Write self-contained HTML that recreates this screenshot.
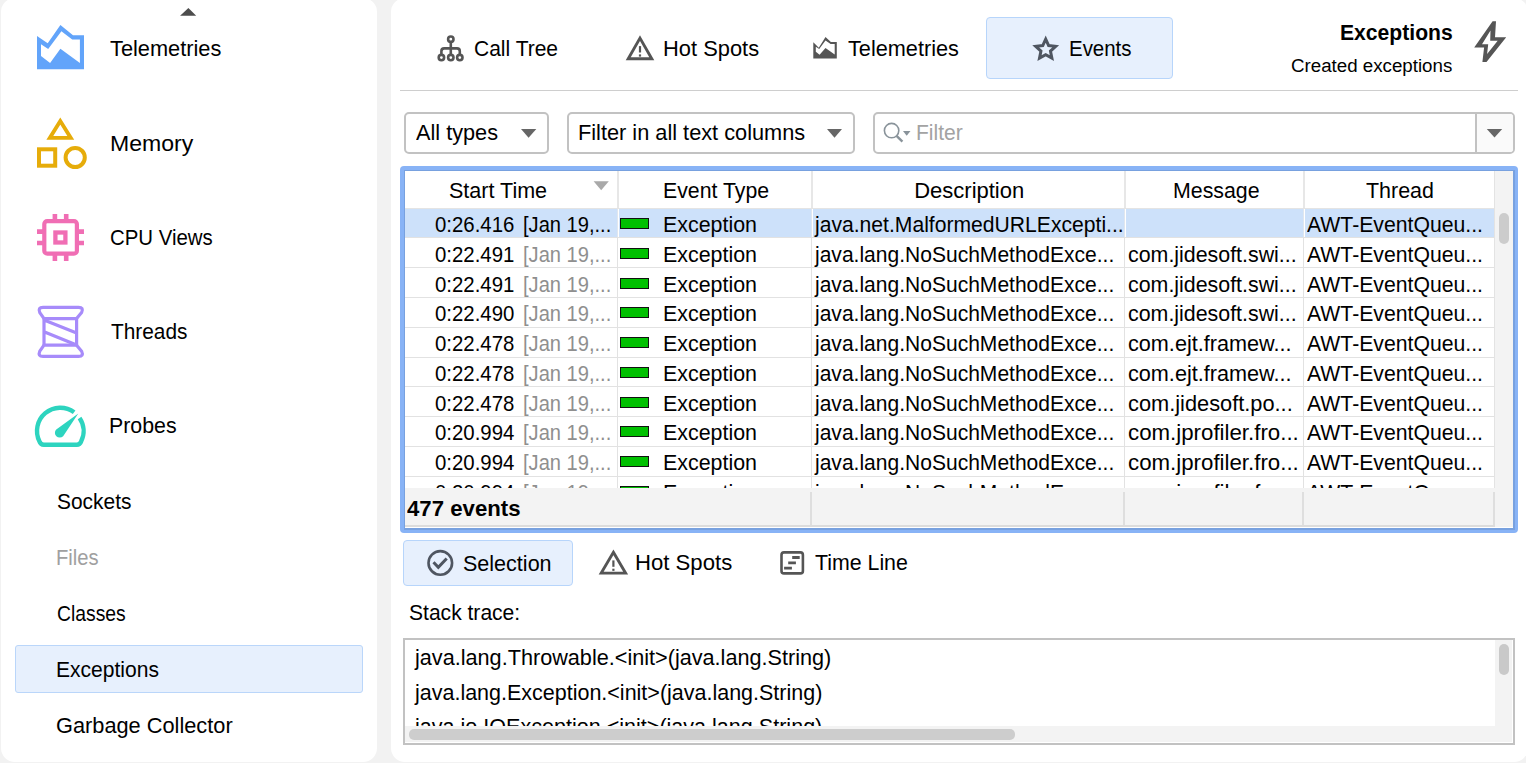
<!DOCTYPE html>
<html><head><meta charset="utf-8"><style>
html,body{margin:0;padding:0;}
body{width:1526px;height:763px;overflow:hidden;background:#f2f2f2;position:relative;font-family:'Liberation Sans', sans-serif;}
.t{position:absolute;white-space:pre;line-height:30px;font-family:'Liberation Sans', sans-serif;transform-origin:0 0;}
</style></head><body>
<div style="position:absolute;left:1px;top:-2px;width:376px;height:764px;background:#fff;border-radius:14px;"></div>
<div style="position:absolute;left:391px;top:-2px;width:1137px;height:764px;background:#fff;border-radius:14px;"></div>
<div class="t" style="left:109.71px;top:34px;font-size:22px;color:#000;transform:scaleX(0.9900);">Telemetries</div>
<div class="t" style="left:109.51px;top:129px;font-size:22px;color:#000;transform:scaleX(1.0477);">Memory</div>
<div class="t" style="left:109.96px;top:223px;font-size:22px;color:#000;transform:scaleX(0.9265);">CPU Views</div>
<div class="t" style="left:110.53px;top:317px;font-size:22px;color:#000;transform:scaleX(0.9469);">Threads</div>
<div class="t" style="left:109.25px;top:411px;font-size:22px;color:#000;transform:scaleX(0.9701);">Probes</div>
<div style="position:absolute;left:14.5px;top:644.5px;width:348.0px;height:48.5px;background:#e7f0fd;border:1.5px solid #bad6fa;border-radius:3px;box-sizing:border-box;"></div>
<div class="t" style="left:56.95px;top:487px;font-size:22px;color:#000;transform:scaleX(0.9508);">Sockets</div>
<div class="t" style="left:56.35px;top:543px;font-size:22px;color:#a0a0a0;transform:scaleX(0.9168);">Files</div>
<div class="t" style="left:57.02px;top:599px;font-size:22px;color:#000;transform:scaleX(0.8790);">Classes</div>
<div class="t" style="left:56.27px;top:655px;font-size:22px;color:#000;transform:scaleX(0.9570);">Exceptions</div>
<div class="t" style="left:56.21px;top:711px;font-size:22px;color:#000;transform:scaleX(0.9895);">Garbage Collector</div>
<div style="position:absolute;left:985.5px;top:16.5px;width:187.0px;height:62.5px;background:#e7f0fd;border:1.5px solid #b7d5fb;border-radius:4px;box-sizing:border-box;"></div>
<div class="t" style="left:473.73px;top:34px;font-size:22px;color:#000;transform:scaleX(0.9547);">Call Tree</div>
<div class="t" style="left:662.71px;top:34px;font-size:22px;color:#000;transform:scaleX(0.9946);">Hot Spots</div>
<div class="t" style="left:848.01px;top:34px;font-size:22px;color:#000;transform:scaleX(0.9856);">Telemetries</div>
<div class="t" style="left:1068.72px;top:34px;font-size:22px;color:#000;transform:scaleX(0.9295);">Events</div>
<div class="t" style="left:1339.89px;top:18px;font-size:22px;color:#000;font-weight:bold;transform:scaleX(0.9600);">Exceptions</div>
<div class="t" style="left:1290.65px;top:51px;font-size:18px;color:#000;transform:scaleX(1.0396);">Created exceptions</div>
<div style="position:absolute;left:400px;top:90px;width:1118px;height:1.2999999999999972px;background:#cecece;"></div>
<div style="position:absolute;left:403.5px;top:111.5px;width:145.0px;height:42.0px;border:2px solid #c2c2c2;border-radius:5px;box-sizing:border-box;background:#fff;"></div>
<div class="t" style="left:416.16px;top:118px;font-size:22px;color:#000;transform:scaleX(0.9866);">All types</div>
<div style="position:absolute;left:566.5px;top:111.5px;width:288.0px;height:42.0px;border:2px solid #c2c2c2;border-radius:5px;box-sizing:border-box;background:#fff;"></div>
<div class="t" style="left:578.02px;top:118px;font-size:22px;color:#000;transform:scaleX(0.9883);">Filter in all text columns</div>
<div style="position:absolute;left:872.5px;top:111.5px;width:642.0px;height:42.0px;border:2px solid #c2c2c2;border-radius:5px;box-sizing:border-box;background:#fff;"></div>
<div style="position:absolute;left:1474.5px;top:113.5px;width:38.0px;height:38.0px;background:#fafafa;border-left:2px solid #c2c2c2;border-radius:0 3px 3px 0;box-sizing:border-box;"></div>
<div class="t" style="left:915.97px;top:118px;font-size:22px;color:#a3a3a3;transform:scaleX(0.9568);">Filter</div>
<div style="position:absolute;left:400px;top:166px;width:1118px;height:366.5px;background:#88b3f6;border-radius:4px;"></div>
<div style="position:absolute;left:403.5px;top:169.5px;width:1111.0px;height:360.0px;background:#78a1df;"></div>
<div style="position:absolute;left:405px;top:171px;width:1108px;height:357px;background:#fff;"></div>
<div style="position:absolute;left:1493.5px;top:171px;width:19.5px;height:356px;background:#f3f3f3;border-left:1.5px solid #e3e3e3;box-sizing:border-box;"></div>
<div style="position:absolute;left:1499px;top:213px;width:10px;height:31px;background:#cccccc;border-radius:5px;"></div>
<div style="position:absolute;left:617px;top:171px;width:2px;height:37px;background:#e7e7e7;"></div>
<div style="position:absolute;left:811px;top:171px;width:2px;height:37px;background:#e7e7e7;"></div>
<div style="position:absolute;left:1124px;top:171px;width:2px;height:37px;background:#e7e7e7;"></div>
<div style="position:absolute;left:1303px;top:171px;width:2px;height:37px;background:#e7e7e7;"></div>
<div style="position:absolute;left:405px;top:208px;width:1089px;height:1px;background:#e4e4e4;"></div>
<div class="t" style="left:449.02px;top:176px;font-size:22px;color:#000;transform:scaleX(0.9781);">Start Time</div>
<div class="t" style="left:662.66px;top:176px;font-size:22px;color:#000;transform:scaleX(0.9669);">Event Type</div>
<div class="t" style="left:914.20px;top:176px;font-size:22px;color:#000;">Description</div>
<div class="t" style="left:1173.45px;top:176px;font-size:22px;color:#000;transform:scaleX(0.9701);">Message</div>
<div class="t" style="left:1366.12px;top:176px;font-size:22px;color:#000;transform:scaleX(0.9750);">Thread</div>
<div style="position:absolute;left:617px;top:209px;width:1px;height:279px;background:#e2e2e2;"></div>
<div style="position:absolute;left:811px;top:209px;width:1px;height:279px;background:#e2e2e2;"></div>
<div style="position:absolute;left:1124px;top:209px;width:1px;height:279px;background:#e2e2e2;"></div>
<div style="position:absolute;left:1303px;top:209px;width:1px;height:279px;background:#e2e2e2;"></div>
<div style="position:absolute;left:405px;top:209px;width:1089px;height:28px;background:#cde1fa;"></div>
<div style="position:absolute;left:617px;top:209px;width:1px;height:28px;background:#dfe6ef;"></div>
<div style="position:absolute;left:618px;top:209px;width:1px;height:28px;background:#fff;"></div>
<div style="position:absolute;left:811px;top:209px;width:1px;height:28px;background:#dfe6ef;"></div>
<div style="position:absolute;left:812px;top:209px;width:1px;height:28px;background:#fff;"></div>
<div style="position:absolute;left:1124px;top:209px;width:1px;height:28px;background:#dfe6ef;"></div>
<div style="position:absolute;left:1125px;top:209px;width:1px;height:28px;background:#fff;"></div>
<div style="position:absolute;left:1303px;top:209px;width:1px;height:28px;background:#dfe6ef;"></div>
<div style="position:absolute;left:1304px;top:209px;width:1px;height:28px;background:#fff;"></div>
<div style="position:absolute;left:405px;top:237px;width:1089px;height:1px;background:#e2e2e2;"></div>
<div style="position:absolute;left:405px;top:267px;width:1089px;height:1px;background:#e2e2e2;"></div>
<div style="position:absolute;left:405px;top:297px;width:1089px;height:1px;background:#e2e2e2;"></div>
<div style="position:absolute;left:405px;top:327px;width:1089px;height:1px;background:#e2e2e2;"></div>
<div style="position:absolute;left:405px;top:357px;width:1089px;height:1px;background:#e2e2e2;"></div>
<div style="position:absolute;left:405px;top:386px;width:1089px;height:1px;background:#e2e2e2;"></div>
<div style="position:absolute;left:405px;top:416px;width:1089px;height:1px;background:#e2e2e2;"></div>
<div style="position:absolute;left:405px;top:446px;width:1089px;height:1px;background:#e2e2e2;"></div>
<div style="position:absolute;left:405px;top:476px;width:1089px;height:1px;background:#e2e2e2;"></div>
<div style="position:absolute;left:405px;top:505px;width:1089px;height:1px;background:#e2e2e2;"></div>
<div class="t" style="left:434.80px;top:210px;font-size:22px;color:#000;transform:scaleX(0.9271);">0:26.416</div>
<div class="t" style="left:523.37px;top:210px;font-size:22px;color:#000;transform:scaleX(0.9136);">[Jan 19,...</div>
<div style="position:absolute;left:620px;top:218px;width:29px;height:11px;background:#00c000;border:1px solid #111;box-sizing:border-box;"></div>
<div class="t" style="left:662.65px;top:210px;font-size:22px;color:#000;transform:scaleX(0.9724);">Exception</div>
<div class="t" style="left:815.12px;top:210px;font-size:22px;color:#000;transform:scaleX(0.9600);">java.net.MalformedURLExcepti...</div>
<div class="t" style="left:1307.06px;top:210px;font-size:22px;color:#000;transform:scaleX(0.9635);">AWT-EventQueu...</div>
<div class="t" style="left:434.80px;top:240px;font-size:22px;color:#000;transform:scaleX(0.9271);">0:22.491</div>
<div class="t" style="left:523.37px;top:240px;font-size:22px;color:#8f8f8f;transform:scaleX(0.9136);">[Jan 19,...</div>
<div style="position:absolute;left:620px;top:248px;width:29px;height:11px;background:#00c000;border:1px solid #111;box-sizing:border-box;"></div>
<div class="t" style="left:662.65px;top:240px;font-size:22px;color:#000;transform:scaleX(0.9724);">Exception</div>
<div class="t" style="left:815.11px;top:240px;font-size:22px;color:#000;transform:scaleX(0.9560);">java.lang.NoSuchMethodExce...</div>
<div class="t" style="left:1127.89px;top:240px;font-size:22px;color:#000;transform:scaleX(0.9715);">com.jidesoft.swi...</div>
<div class="t" style="left:1307.06px;top:240px;font-size:22px;color:#000;transform:scaleX(0.9635);">AWT-EventQueu...</div>
<div class="t" style="left:434.80px;top:270px;font-size:22px;color:#000;transform:scaleX(0.9271);">0:22.491</div>
<div class="t" style="left:523.37px;top:270px;font-size:22px;color:#8f8f8f;transform:scaleX(0.9136);">[Jan 19,...</div>
<div style="position:absolute;left:620px;top:278px;width:29px;height:11px;background:#00c000;border:1px solid #111;box-sizing:border-box;"></div>
<div class="t" style="left:662.65px;top:270px;font-size:22px;color:#000;transform:scaleX(0.9724);">Exception</div>
<div class="t" style="left:815.11px;top:270px;font-size:22px;color:#000;transform:scaleX(0.9560);">java.lang.NoSuchMethodExce...</div>
<div class="t" style="left:1127.89px;top:270px;font-size:22px;color:#000;transform:scaleX(0.9715);">com.jidesoft.swi...</div>
<div class="t" style="left:1307.06px;top:270px;font-size:22px;color:#000;transform:scaleX(0.9635);">AWT-EventQueu...</div>
<div class="t" style="left:434.80px;top:299px;font-size:22px;color:#000;transform:scaleX(0.9271);">0:22.490</div>
<div class="t" style="left:523.37px;top:299px;font-size:22px;color:#8f8f8f;transform:scaleX(0.9136);">[Jan 19,...</div>
<div style="position:absolute;left:620px;top:307px;width:29px;height:11px;background:#00c000;border:1px solid #111;box-sizing:border-box;"></div>
<div class="t" style="left:662.65px;top:299px;font-size:22px;color:#000;transform:scaleX(0.9724);">Exception</div>
<div class="t" style="left:815.11px;top:299px;font-size:22px;color:#000;transform:scaleX(0.9560);">java.lang.NoSuchMethodExce...</div>
<div class="t" style="left:1127.89px;top:299px;font-size:22px;color:#000;transform:scaleX(0.9715);">com.jidesoft.swi...</div>
<div class="t" style="left:1307.06px;top:299px;font-size:22px;color:#000;transform:scaleX(0.9635);">AWT-EventQueu...</div>
<div class="t" style="left:434.80px;top:329px;font-size:22px;color:#000;transform:scaleX(0.9271);">0:22.478</div>
<div class="t" style="left:523.37px;top:329px;font-size:22px;color:#8f8f8f;transform:scaleX(0.9136);">[Jan 19,...</div>
<div style="position:absolute;left:620px;top:337px;width:29px;height:11px;background:#00c000;border:1px solid #111;box-sizing:border-box;"></div>
<div class="t" style="left:662.65px;top:329px;font-size:22px;color:#000;transform:scaleX(0.9724);">Exception</div>
<div class="t" style="left:815.11px;top:329px;font-size:22px;color:#000;transform:scaleX(0.9560);">java.lang.NoSuchMethodExce...</div>
<div class="t" style="left:1127.88px;top:329px;font-size:22px;color:#000;transform:scaleX(0.9834);">com.ejt.framew...</div>
<div class="t" style="left:1307.06px;top:329px;font-size:22px;color:#000;transform:scaleX(0.9635);">AWT-EventQueu...</div>
<div class="t" style="left:434.80px;top:359px;font-size:22px;color:#000;transform:scaleX(0.9271);">0:22.478</div>
<div class="t" style="left:523.37px;top:359px;font-size:22px;color:#8f8f8f;transform:scaleX(0.9136);">[Jan 19,...</div>
<div style="position:absolute;left:620px;top:367px;width:29px;height:11px;background:#00c000;border:1px solid #111;box-sizing:border-box;"></div>
<div class="t" style="left:662.65px;top:359px;font-size:22px;color:#000;transform:scaleX(0.9724);">Exception</div>
<div class="t" style="left:815.11px;top:359px;font-size:22px;color:#000;transform:scaleX(0.9560);">java.lang.NoSuchMethodExce...</div>
<div class="t" style="left:1127.88px;top:359px;font-size:22px;color:#000;transform:scaleX(0.9834);">com.ejt.framew...</div>
<div class="t" style="left:1307.06px;top:359px;font-size:22px;color:#000;transform:scaleX(0.9635);">AWT-EventQueu...</div>
<div class="t" style="left:434.80px;top:389px;font-size:22px;color:#000;transform:scaleX(0.9271);">0:22.478</div>
<div class="t" style="left:523.37px;top:389px;font-size:22px;color:#8f8f8f;transform:scaleX(0.9136);">[Jan 19,...</div>
<div style="position:absolute;left:620px;top:397px;width:29px;height:11px;background:#00c000;border:1px solid #111;box-sizing:border-box;"></div>
<div class="t" style="left:662.65px;top:389px;font-size:22px;color:#000;transform:scaleX(0.9724);">Exception</div>
<div class="t" style="left:815.11px;top:389px;font-size:22px;color:#000;transform:scaleX(0.9560);">java.lang.NoSuchMethodExce...</div>
<div class="t" style="left:1127.87px;top:389px;font-size:22px;color:#000;transform:scaleX(0.9905);">com.jidesoft.po...</div>
<div class="t" style="left:1307.06px;top:389px;font-size:22px;color:#000;transform:scaleX(0.9635);">AWT-EventQueu...</div>
<div class="t" style="left:434.80px;top:418px;font-size:22px;color:#000;transform:scaleX(0.9271);">0:20.994</div>
<div class="t" style="left:523.37px;top:418px;font-size:22px;color:#8f8f8f;transform:scaleX(0.9136);">[Jan 19,...</div>
<div style="position:absolute;left:620px;top:426px;width:29px;height:11px;background:#00c000;border:1px solid #111;box-sizing:border-box;"></div>
<div class="t" style="left:662.65px;top:418px;font-size:22px;color:#000;transform:scaleX(0.9724);">Exception</div>
<div class="t" style="left:815.11px;top:418px;font-size:22px;color:#000;transform:scaleX(0.9560);">java.lang.NoSuchMethodExce...</div>
<div class="t" style="left:1127.85px;top:418px;font-size:22px;color:#000;transform:scaleX(1.0121);">com.jprofiler.fro...</div>
<div class="t" style="left:1307.06px;top:418px;font-size:22px;color:#000;transform:scaleX(0.9635);">AWT-EventQueu...</div>
<div class="t" style="left:434.80px;top:448px;font-size:22px;color:#000;transform:scaleX(0.9271);">0:20.994</div>
<div class="t" style="left:523.37px;top:448px;font-size:22px;color:#8f8f8f;transform:scaleX(0.9136);">[Jan 19,...</div>
<div style="position:absolute;left:620px;top:456px;width:29px;height:11px;background:#00c000;border:1px solid #111;box-sizing:border-box;"></div>
<div class="t" style="left:662.65px;top:448px;font-size:22px;color:#000;transform:scaleX(0.9724);">Exception</div>
<div class="t" style="left:815.11px;top:448px;font-size:22px;color:#000;transform:scaleX(0.9560);">java.lang.NoSuchMethodExce...</div>
<div class="t" style="left:1127.85px;top:448px;font-size:22px;color:#000;transform:scaleX(1.0121);">com.jprofiler.fro...</div>
<div class="t" style="left:1307.06px;top:448px;font-size:22px;color:#000;transform:scaleX(0.9635);">AWT-EventQueu...</div>
<div class="t" style="left:434.80px;top:478px;font-size:22px;color:#000;transform:scaleX(0.9271);">0:20.994</div>
<div class="t" style="left:523.37px;top:478px;font-size:22px;color:#8f8f8f;transform:scaleX(0.9136);">[Jan 19,...</div>
<div style="position:absolute;left:620px;top:486px;width:29px;height:11px;background:#00c000;border:1px solid #111;box-sizing:border-box;"></div>
<div class="t" style="left:662.65px;top:478px;font-size:22px;color:#000;transform:scaleX(0.9724);">Exception</div>
<div class="t" style="left:815.11px;top:478px;font-size:22px;color:#000;transform:scaleX(0.9560);">java.lang.NoSuchMethodExce...</div>
<div class="t" style="left:1127.85px;top:478px;font-size:22px;color:#000;transform:scaleX(1.0121);">com.jprofiler.fro...</div>
<div class="t" style="left:1307.06px;top:478px;font-size:22px;color:#000;transform:scaleX(0.9635);">AWT-EventQueu...</div>
<div style="position:absolute;left:405px;top:488px;width:1090px;height:37px;background:#f3f3f3;"></div>
<div style="position:absolute;left:810px;top:492px;width:2px;height:33px;background:#dedede;"></div>
<div style="position:absolute;left:1123px;top:492px;width:2px;height:33px;background:#dedede;"></div>
<div style="position:absolute;left:1302px;top:492px;width:2px;height:33px;background:#dedede;"></div>
<div style="position:absolute;left:1493px;top:492px;width:2px;height:33px;background:#dedede;"></div>
<div style="position:absolute;left:405px;top:525px;width:1090px;height:2px;background:#dcdcdc;"></div>
<div class="t" style="left:406.86px;top:494px;font-size:22px;color:#000;font-weight:bold;transform:scaleX(1.0091);">477 events</div>
<div style="position:absolute;left:402.5px;top:539.5px;width:170.0px;height:46.0px;background:#e7f0fd;border:1.5px solid #b7d5fb;border-radius:4px;box-sizing:border-box;"></div>
<div class="t" style="left:463.02px;top:549px;font-size:22px;color:#000;transform:scaleX(0.9787);">Selection</div>
<div class="t" style="left:635.28px;top:548px;font-size:22px;color:#000;transform:scaleX(1.0063);">Hot Spots</div>
<div class="t" style="left:814.82px;top:548px;font-size:22px;color:#000;transform:scaleX(0.9693);">Time Line</div>
<div class="t" style="left:408.84px;top:598px;font-size:22px;color:#000;transform:scaleX(0.9572);">Stack trace:</div>
<div style="position:absolute;left:403px;top:638px;width:1112px;height:107px;border:2px solid #c2c2c2;box-sizing:border-box;background:#fff;"></div>
<div class="t" style="left:415.03px;top:643px;font-size:22px;color:#000;transform:scaleX(0.9839);">java.lang.Throwable.&lt;init&gt;(java.lang.String)</div>
<div class="t" style="left:415.02px;top:678px;font-size:22px;color:#000;transform:scaleX(0.9767);">java.lang.Exception.&lt;init&gt;(java.lang.String)</div>
<div class="t" style="left:415.03px;top:712px;font-size:22px;color:#000;transform:scaleX(0.9796);">java.io.IOException.&lt;init&gt;(java.lang.String)</div>
<div style="position:absolute;left:405px;top:726px;width:1107px;height:16px;background:#f3f3f3;"></div>
<div style="position:absolute;left:1495px;top:640px;width:17px;height:86px;background:#f3f3f3;"></div>
<div style="position:absolute;left:409px;top:729.4px;width:606px;height:10.200000000000045px;background:#cdcdcd;border-radius:5px;"></div>
<div style="position:absolute;left:1499px;top:643.6px;width:10.200000000000045px;height:31.399999999999977px;background:#c9c9c9;border-radius:5px;"></div>
<svg style="position:absolute;left:0;top:0" width="1526" height="763" viewBox="0 0 1526 763">
<path d="M180.1 15.7 L188.4 7.9 L196.2 15.7 Z" fill="#4d4d4d"/>
<path fill="#62a4fa" fill-rule="evenodd" d="M37 35.9 L47.7 43.3 L60.4 25.1 L73 35.2 L84 35.2 L84 69.3 L37 69.3 Z M41 44.2 L48.2 49 L61.4 31.3 L72.2 39.6 L79.9 39.6 L79.9 62.9 L60.4 48.7 L50.1 62.9 L41 55.9 Z"/>
<g fill="none" stroke="#e6ac0a" stroke-width="4"><path d="M60.3 121 L49.8 137.9 L70.8 137.9 Z" stroke-width="3.8" stroke-linejoin="miter"/><rect x="39" y="149.3" width="16.2" height="16.4"/><circle cx="75.2" cy="157.5" r="9.6"/></g>
<g fill="none" stroke="#f06eb4" stroke-width="4.2"><rect x="44.3" y="221.1" width="32.6" height="32.6" rx="3"/><rect x="55.4" y="232.5" width="10" height="10" stroke-width="4.3"/><path d="M54.9 214 V220 M66.2 214 V220 M54.9 255 V261 M66.2 255 V261 M37 231.6 H43 M37 243 H43 M78 231.6 H84 M78 243 H84" stroke-width="4.6"/></g>
<g fill="none" stroke="#a78bfa" stroke-width="3.2" stroke-linejoin="round"><path d="M44 318.6 L39.8 312.6 Q37.6 307.3 43 307.3 L78.6 307.3 Q84 307.3 81.6 312.6 L76.6 318.6 Z"/><path d="M44 345.2 L39.8 351.2 Q37.6 356.4 43 356.4 L78.6 356.4 Q84 356.4 81.6 351.2 L76.6 345.2 Z"/><path d="M44 318.6 V345.2 M76.6 318.6 V345.2 M44 320 L76.6 333 M44 331.8 L76.6 345"/></g>
<g fill="#2dd4bf"><path d="M79.56 417.9 A23.3 23.3 0 0 1 81.1 441.5 Q80 444.8 76.8 444.8 L43.8 444.8 Q40.6 444.8 39.5 441.5 A23.3 23.3 0 0 1 74.13 412.24" fill="none" stroke="#2dd4bf" stroke-width="4.4" stroke-linejoin="round"/><path d="M78.3 413.6 L63.15 436.14 A4.8 4.8 0 1 1 56.25 429.46 Z"/></g>
<g fill="none" stroke="#555" stroke-width="2.6"><circle cx="450.8" cy="39.2" r="2.7"/><path d="M450.8 41.9 V54.9 M441.4 54.9 V51.2 Q441.4 48.4 444.2 48.4 L457 48.4 Q459.8 48.4 459.8 51.2 V54.9"/><circle cx="441.4" cy="57.6" r="2.7"/><circle cx="450.8" cy="57.6" r="2.7"/><circle cx="459.8" cy="57.6" r="2.7"/></g>
<path d="M640.0 38.1 L651.8 58.8 L628.2 58.8 Z" fill="none" stroke="#555" stroke-width="2.9" stroke-linejoin="miter"/>
<path d="M640.0 46.1 V52.5" stroke="#555" stroke-width="2.2"/>
<rect x="638.9" y="54.4" width="2.2" height="2.2" fill="#555"/>
<path fill="#555" fill-rule="evenodd" d="M813.3 42.2 L818.8 47.7 L825.5 37.1 L830.9 42 L836.8 42 L836.8 58.5 L813.3 58.5 Z M815.8 46.7 L815.8 51.7 L819.6 54.8 L825.5 47.9 L834.7 54.5 L834.7 43.9 L830.6 43.9 L825.5 40.5 L819.2 48.9 Z"/>
<path d="M1045.70 39.10 L1048.64 45.55 L1055.69 46.36 L1050.46 51.15 L1051.87 58.09 L1045.70 54.60 L1039.53 58.09 L1040.94 51.15 L1035.71 46.36 L1042.76 45.55 Z" fill="none" stroke="#4f5661" stroke-width="3.0" stroke-linejoin="miter"/>
<path fill="#555" fill-rule="evenodd" d="M1492.6 21.3 L1496 21.3 L1495 37.2 L1506.2 37.2 L1486.5 61.9 L1482.4 61.9 L1484.1 47.4 L1474.2 47.4 Z M1490.5 30.5 L1490.2 40.8 L1497.7 40.8 L1487.1 53.9 L1488.2 44.2 L1482 44.2 Z"/>
<path d="M521 129 L536.3 129 L528.6 137.7 Z" fill="#666"/>
<path d="M827 129 L842 129 L834.5 137.7 Z" fill="#666"/>
<path d="M1486.8 129 L1502.2 129 L1494.5 137.5 Z" fill="#666"/>
<g stroke="#89939a" fill="none" stroke-width="1.6"><circle cx="891.6" cy="130.6" r="7.2"/><path d="M896.6 135.8 L902.4 141.6" stroke-width="2.4"/></g>
<path d="M903 131 L910.5 131 L906.7 135.8 Z" fill="#89939a"/>
<path d="M593.6 181.2 L608.8 181.2 L601.2 190.2 Z" fill="#a9a9a9"/>
<circle cx="440.3" cy="562.9" r="11.8" fill="none" stroke="#4f5661" stroke-width="2.6"/>
<path d="M433.5 562.3 L438.3 567.3 L446.7 558.5" fill="none" stroke="#4f5661" stroke-width="3"/>
<path d="M613.4 552.3 L625.6 573.1 L601.2 573.1 Z" fill="none" stroke="#555" stroke-width="2.9" stroke-linejoin="miter"/>
<path d="M613.4 560.4 V566.8" stroke="#555" stroke-width="2.2"/>
<rect x="612.3" y="568.7" width="2.2" height="2.2" fill="#555"/>
<rect x="781.5" y="552.4" width="21.4" height="21" rx="2.5" fill="none" stroke="#555" stroke-width="2.6"/>
<path d="M792.2 557.5 H799.7 M788.2 562.9 H795.9 M784.1 568.2 H791.9" stroke="#555" stroke-width="2.8"/>
</svg>
</body></html>
